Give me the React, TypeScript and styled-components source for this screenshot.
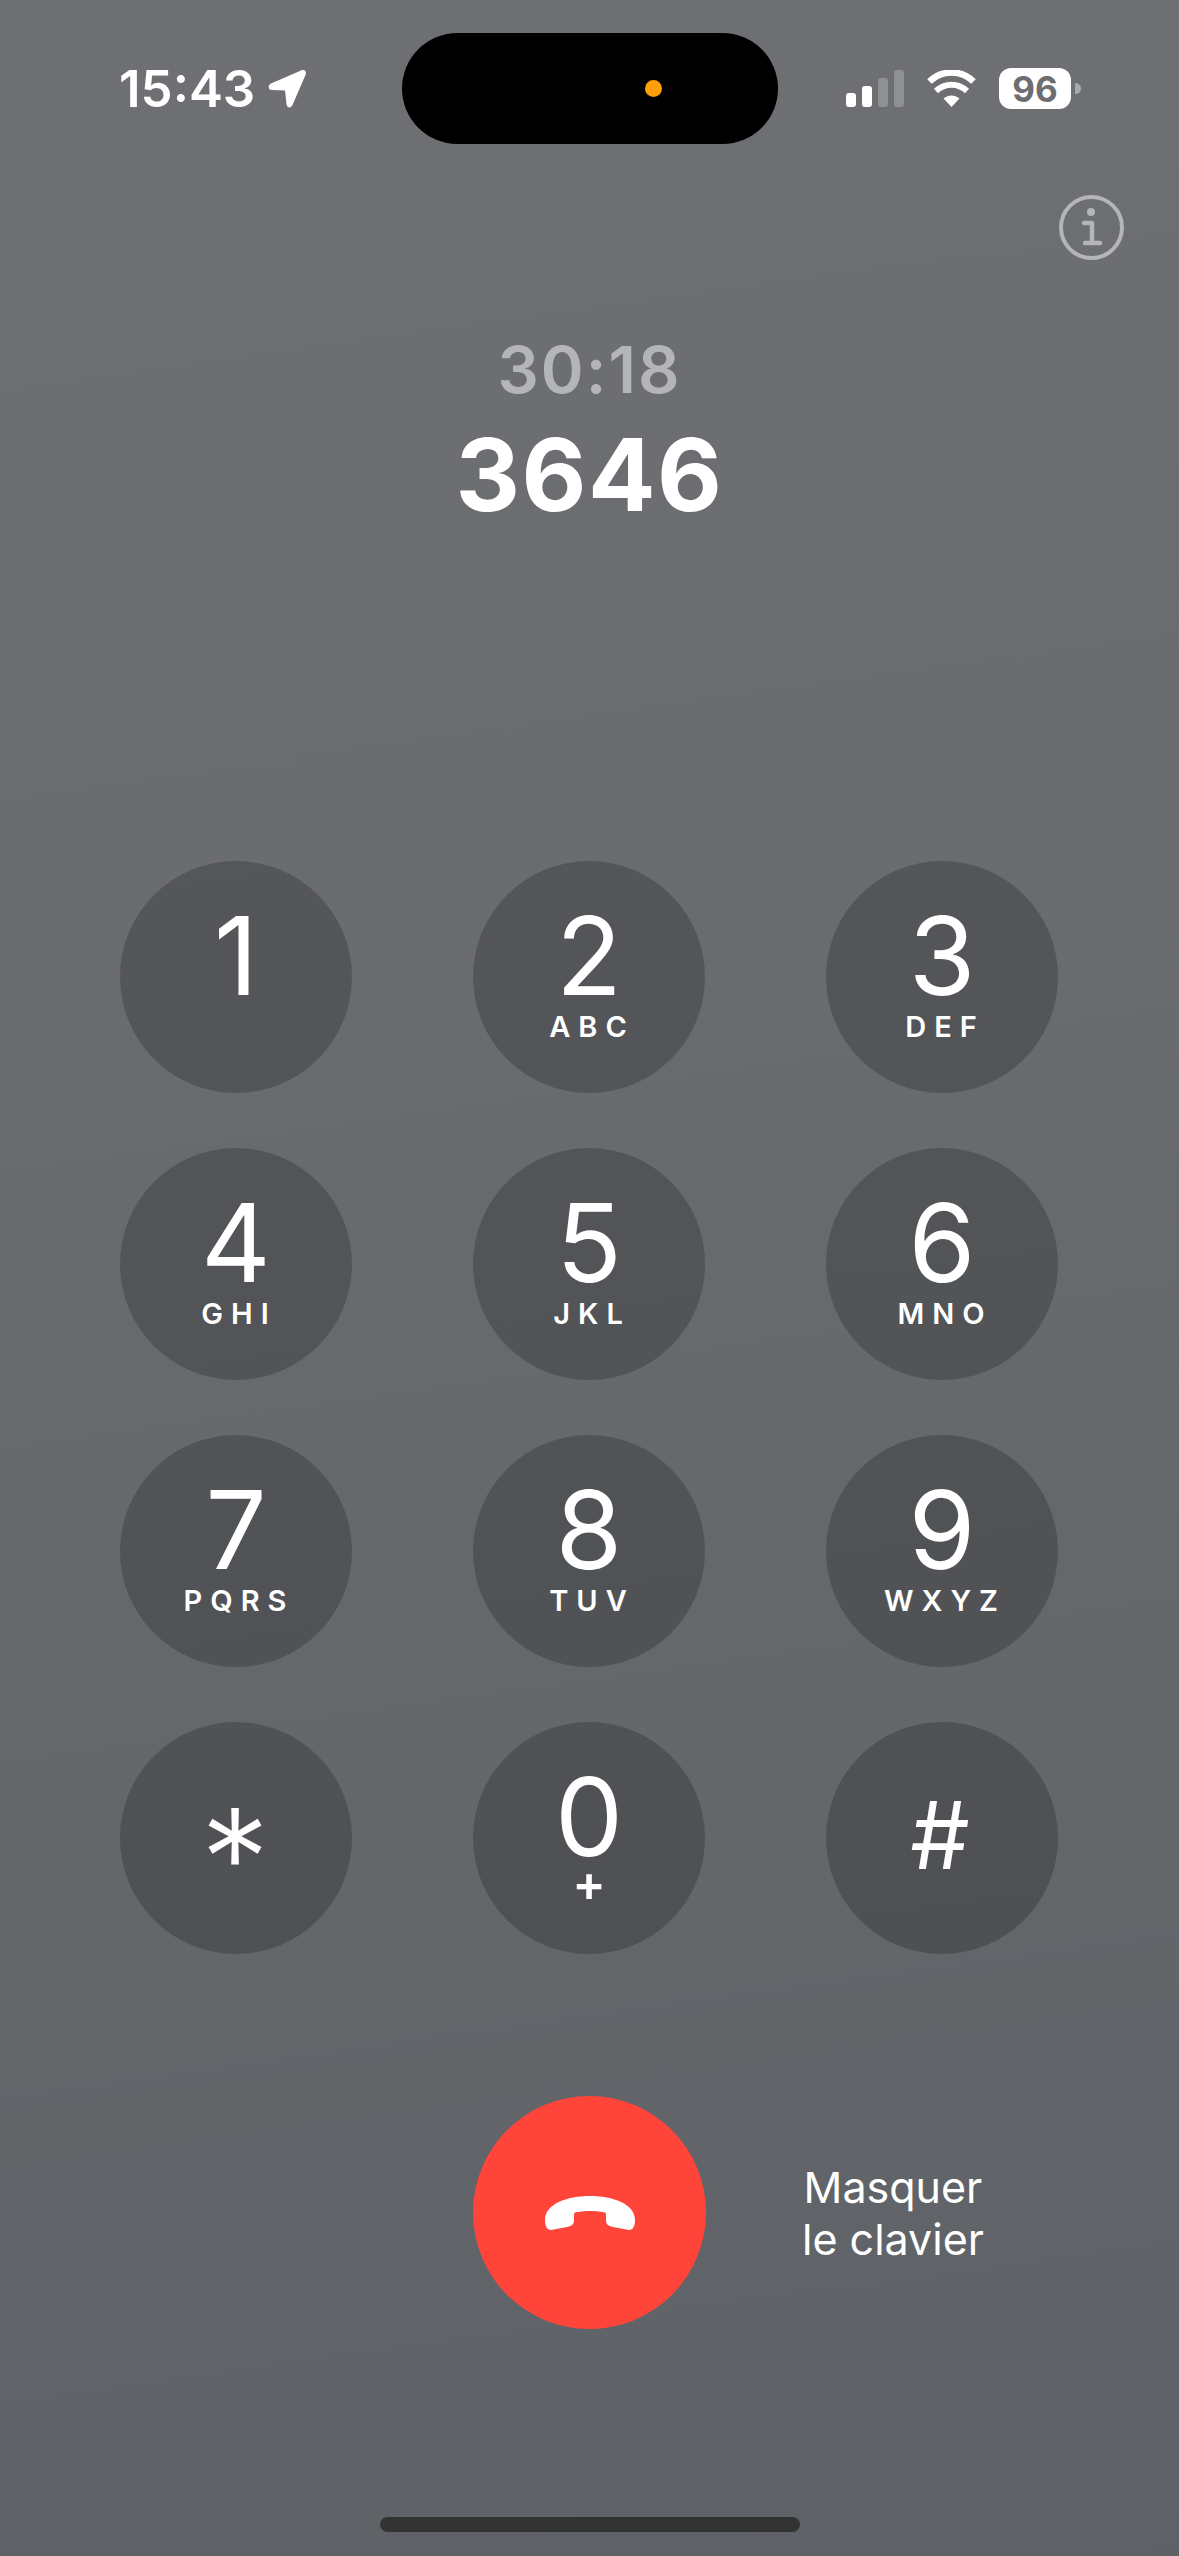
import styled, { createGlobalStyle } from "styled-components";

const GlobalStyle = createGlobalStyle`
  html, body {
    margin: 0;
    padding: 0;
    background: #66686b;
  }
  * {
    box-sizing: border-box;
  }
`;

const Screen = styled.div`
  display: flex;
  flex-direction: column;
  width: 1179px;
  height: 2556px;
  overflow: hidden;
  font-family: Inter, "Liberation Sans", sans-serif;
  color: #fff;
  background: linear-gradient(172deg, #6f7073 0%, #696b6e 40%, #5e6166 100%);
`;

const StatusBar = styled.header`
  display: grid;
  grid-template-columns: 283px 376px 1fr;
  align-items: center;
  padding: 33px 0 0 119px;
`;

const ClockGroup = styled.div`
  display: flex;
  align-items: center;
  gap: 13px;
`;

const Clock = styled.span`
  font-size: 51px;
  line-height: 50px;
  font-weight: 600;
`;

const Island = styled.div`
  display: flex;
  align-items: center;
  justify-content: flex-end;
  height: 111px;
  padding-right: 116px;
  border-radius: 56px;
  background: #000;
`;

const MicDot = styled.span`
  width: 17px;
  height: 17px;
  border-radius: 50%;
  background: #ff9f0a;
`;

const StatusIcons = styled.div`
  display: flex;
  align-items: center;
  gap: 23px;
  padding-left: 68px;
`;

const Signal = styled.div`
  display: flex;
  align-items: flex-end;
  gap: 6px;
  height: 37px;
`;

const SignalBar = styled.span<{ $h: number; $off?: boolean }>`
  width: 10px;
  height: ${(p) => p.$h}px;
  border-radius: 3px;
  background: ${(p) => (p.$off ? "#8f9092" : "#fff")};
`;

const Battery = styled.div`
  display: flex;
  align-items: center;
  gap: 4px;
`;

const BatteryBody = styled.div`
  display: flex;
  align-items: center;
  justify-content: center;
  width: 72px;
  height: 41px;
  border-radius: 12px;
  background: #fff;
  color: #6d6e71;
  font-size: 35px;
  font-weight: 700;
`;

const BatteryCap = styled.span`
  width: 6px;
  height: 11px;
  border-radius: 0 6px 6px 0;
  background: #a9aaac;
`;

const InfoRow = styled.div`
  display: flex;
  justify-content: flex-end;
  padding: 51px 55px 0 0;
`;

const CallInfo = styled.section`
  display: flex;
  flex-direction: column;
  align-items: center;
  margin-top: 77px;
`;

const Duration = styled.div`
  font-size: 65px;
  line-height: 65px;
  font-weight: 600;
  letter-spacing: 2px;
  color: #b4b5bb;
`;

const CallNumber = styled.div`
  margin-top: 23px;
  font-size: 100px;
  line-height: 100px;
  font-weight: 700;
  letter-spacing: 1.5px;
`;

const Keypad = styled.div`
  display: grid;
  grid-template-columns: repeat(3, 232px);
  grid-auto-rows: 232px;
  gap: 55px 121px;
  margin-top: 336px;
  padding-left: 120px;
`;

const Key = styled.button`
  display: flex;
  flex-direction: column;
  align-items: center;
  width: 232px;
  height: 232px;
  padding: 41px 0 0;
  border: 0;
  border-radius: 50%;
  font-family: inherit;
  color: #fff;
  background: rgba(0, 0, 0, 0.2);
`;

const Digit = styled.span`
  font-size: 108px;
  line-height: 108px;
  font-weight: 400;
`;

const Letters = styled.span`
  margin-top: 3px;
  padding-left: 6px;
  font-size: 29px;
  line-height: 28px;
  font-weight: 600;
  letter-spacing: 8px;
`;

const Plus = styled.span`
  margin-top: -10px;
  font-size: 50px;
  line-height: 44px;
  font-weight: 600;
`;

const SymbolKey = styled(Key)`
  justify-content: center;
  padding: 0;
`;

const Star = styled.span`
  font-size: 138px;
  line-height: 138px;
  font-weight: 300;
  transform: translate(-1px, 20px);
`;

const Hash = styled.span`
  font-size: 94px;
  line-height: 94px;
  font-weight: 400;
  transform: translate(-2px, -3px);
`;

const Footer = styled.footer`
  display: flex;
  align-items: center;
  gap: 96px;
  margin-top: 142px;
  padding-left: 473px;
`;

const HangUp = styled.button`
  display: flex;
  align-items: center;
  justify-content: center;
  width: 233px;
  height: 233px;
  padding: 0;
  border: 0;
  border-radius: 50%;
  background: #ff453a;
`;

const HideLabel = styled.div`
  font-size: 43px;
  line-height: 52px;
  font-weight: 400;
  text-align: center;
`;

const HomeBar = styled.div`
  align-self: center;
  width: 420px;
  height: 15px;
  margin-top: 188px;
  border-radius: 8px;
  background: #333334;
`;

const keys = [
  { digit: "1", letters: "" },
  { digit: "2", letters: "ABC" },
  { digit: "3", letters: "DEF" },
  { digit: "4", letters: "GHI" },
  { digit: "5", letters: "JKL" },
  { digit: "6", letters: "MNO" },
  { digit: "7", letters: "PQRS" },
  { digit: "8", letters: "TUV" },
  { digit: "9", letters: "WXYZ" },
];

const LocationArrow = () => (
  <svg width="38" height="38" viewBox="0 0 38 38">
    <path
      d="M33 0.5 L3 13.5 C-0.5 15 0 20 4 20 L17 20.5 L18.5 34 C19 38.5 23 38.5 24.5 35 L37.5 5 C39 1.5 36.5 -1 33 0.5 Z"
      fill="#fff"
    />
  </svg>
);

const WifiIcon = () => (
  <svg width="49" height="37" viewBox="0 0 49 37" fill="none">
    <path d="M24.5 37 L16.5 28.5 C21.5 24.5 27.5 24.5 32.5 28.5 Z" fill="#fff" />
    <path d="M9 21 C18 12.5 31 12.5 40 21" stroke="#fff" strokeWidth="6" />
    <path d="M2.5 11.5 C15 -0.5 34 -0.5 46.5 11.5" stroke="#fff" strokeWidth="6.5" />
  </svg>
);

const InfoIcon = () => (
  <svg width="65" height="65" viewBox="0 0 65 65" fill="none">
    <circle cx="32.5" cy="32.5" r="30.5" stroke="#b4b5bb" strokeWidth="4" />
    <circle cx="32" cy="17" r="4" fill="#b4b5bb" />
    <path
      d="M25 28 H33 V47 M26 48 H41"
      stroke="#b4b5bb"
      strokeWidth="4.5"
      strokeLinecap="round"
      strokeLinejoin="round"
    />
  </svg>
);

const PhoneDownIcon = () => (
  <svg width="90" height="34" viewBox="0 0 90 34">
    <path
      d="M0 24 C0 8 22 0 45 0 C68 0 90 8 90 24 C90 30 88 34 84 34 L68 31 C63 30 61 28 61 24 L61 19 C61 17 60 16 58 16 C50 14.5 40 14.5 32 16 C30 16 29 17 29 19 L29 24 C29 28 27 30 22 31 L6 34 C2 34 0 30 0 24 Z"
      fill="#fff"
    />
  </svg>
);

export default function App() {
  return (
    <Screen>
      <GlobalStyle />
      <StatusBar>
        <ClockGroup>
          <Clock>15:43</Clock>
          <LocationArrow />
        </ClockGroup>
        <Island>
          <MicDot />
        </Island>
        <StatusIcons>
          <Signal>
            <SignalBar $h={14} />
            <SignalBar $h={21} />
            <SignalBar $h={29} $off />
            <SignalBar $h={37} $off />
          </Signal>
          <WifiIcon />
          <Battery>
            <BatteryBody>96</BatteryBody>
            <BatteryCap />
          </Battery>
        </StatusIcons>
      </StatusBar>

      <InfoRow>
        <InfoIcon />
      </InfoRow>

      <CallInfo>
        <Duration>30:18</Duration>
        <CallNumber>3646</CallNumber>
      </CallInfo>

      <Keypad>
        {keys.map(({ digit, letters }) => (
          <Key key={digit}>
            <Digit>{digit}</Digit>
            {letters && <Letters>{letters}</Letters>}
          </Key>
        ))}
        <SymbolKey>
          <Star>*</Star>
        </SymbolKey>
        <Key>
          <Digit>0</Digit>
          <Plus>+</Plus>
        </Key>
        <SymbolKey>
          <Hash>#</Hash>
        </SymbolKey>
      </Keypad>

      <Footer>
        <HangUp>
          <PhoneDownIcon />
        </HangUp>
        <HideLabel>
          Masquer
          <br />
          le clavier
        </HideLabel>
      </Footer>

      <HomeBar />
    </Screen>
  );
}
